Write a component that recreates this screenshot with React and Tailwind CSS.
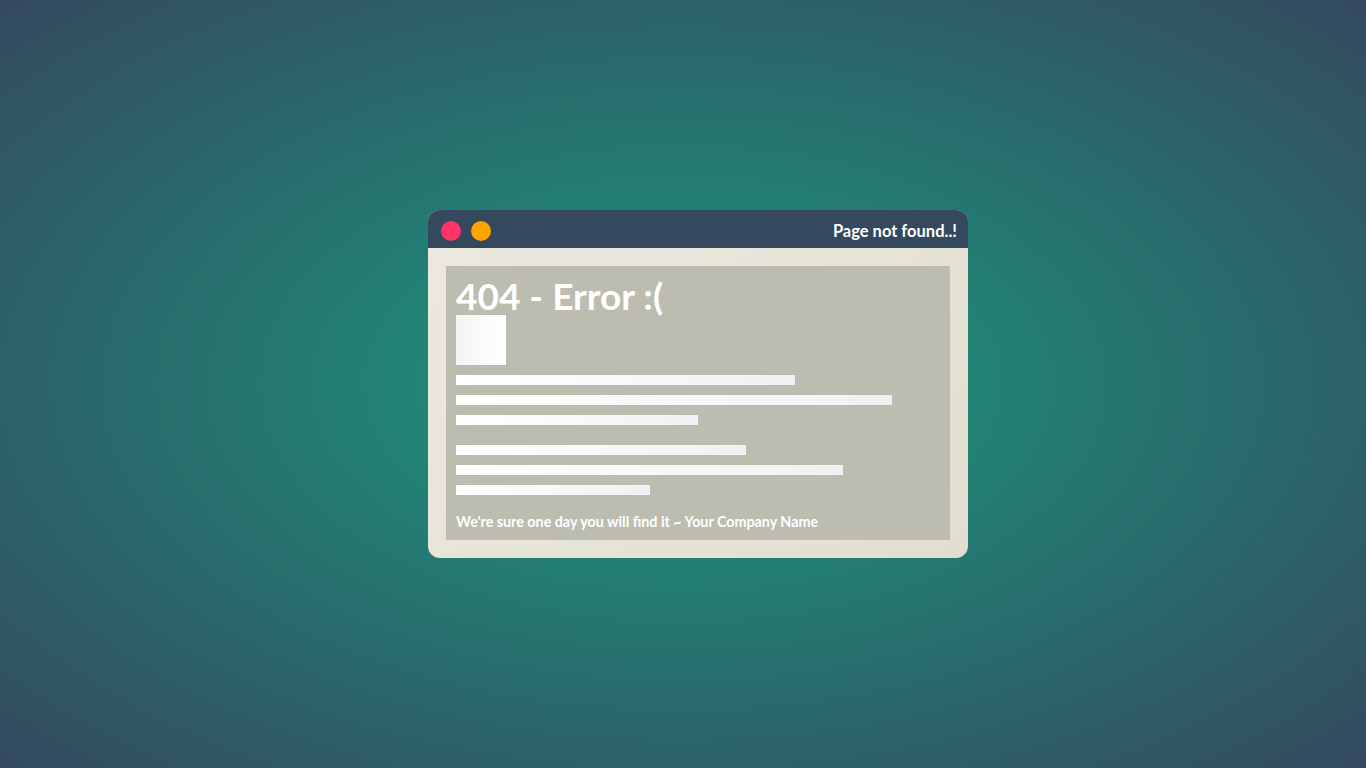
export default function App() {
  const bars = [
    [339, 436, 242],
    [290, 387, 194],
  ]

  return (
    <div className="flex h-screen w-full items-center justify-center bg-[radial-gradient(ellipse_at_center,#1f8a79_20%,#34495e_100%)] font-['Lato','Liberation_Sans',sans-serif]">
      <div className="ml-[30px] w-[540px] overflow-hidden rounded-[12px] bg-[linear-gradient(135deg,#ebe9df_0%,#e7e5d8_50%,#e2ddcf_100%)]">
        <div className="flex h-[38px] items-center bg-[#34495e] pt-[4px] pl-[13px] pr-[11px]">
          <span className="h-[20px] w-[20px] rounded-full bg-[#ff3366]" />
          <span className="ml-[10px] h-[20px] w-[20px] rounded-full bg-[#ffa500]" />
          <span className="ml-auto text-[16.5px] font-bold text-white">Page not found..!</span>
        </div>
        <div className="p-[18px]">
          <div className="bg-[#bcbcb1] px-[10px] pt-[10px] pb-[9px]">
            <h1 className="text-[37px] leading-[39px] font-bold text-white">404 - Error :(</h1>
            <div className="h-[50px] w-[50px] bg-[linear-gradient(90deg,#f4f4f4,#ffffff)]" />
            <div className="mt-[10px] flex flex-col gap-[10px]">
              {bars[0].map((w, i) => (
                <div key={i} className="h-[10px] bg-[linear-gradient(90deg,#ffffff,#f1f1f4)]" style={{ width: w }} />
              ))}
            </div>
            <div className="mt-[20px] flex flex-col gap-[10px]">
              {bars[1].map((w, i) => (
                <div key={i} className="h-[10px] bg-[linear-gradient(90deg,#ffffff,#f1f1f4)]" style={{ width: w }} />
              ))}
            </div>
            <p className="mt-[18px] text-[14.3px] leading-[18px] font-bold text-white">
              We're sure one day you will find it ~ Your Company Name
            </p>
          </div>
        </div>
      </div>
    </div>
  )
}
